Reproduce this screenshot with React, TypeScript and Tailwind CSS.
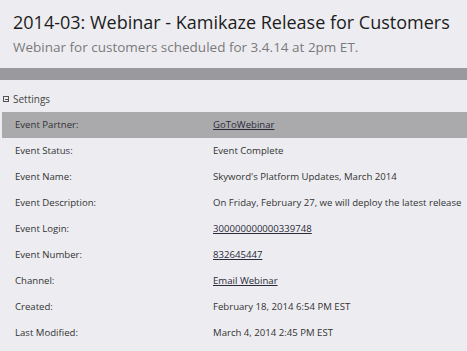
import React from 'react';

interface Field {
  label: string;
  value: string;
  link?: boolean;
}

const fields: Field[] = [
  { label: 'Event Partner:', value: 'GoToWebinar', link: true },
  { label: 'Event Status:', value: 'Event Complete' },
  { label: 'Event Name:', value: "Skyword's Platform Updates, March 2014" },
  { label: 'Event Description:', value: 'On Friday, February 27, we will deploy the latest release' },
  { label: 'Event Login:', value: '300000000000339748', link: true },
  { label: 'Event Number:', value: '832645447', link: true },
  { label: 'Channel:', value: 'Email Webinar', link: true },
  { label: 'Created:', value: 'February 18, 2014 6:54 PM EST' },
  { label: 'Last Modified:', value: 'March 4, 2014 2:45 PM EST' },
];

const App: React.FC = () => {
  return (
    <div className="w-[467px] h-[351px] overflow-hidden bg-[#ededf1] font-['Open_Sans',sans-serif]">
      <div className="pl-[13px] pt-[9px]">
        <h1 className="text-[18px] leading-[26px] text-[#1c1c1c] whitespace-nowrap">
          2014-03: Webinar - Kamikaze Release for Customers
        </h1>
        <p className="mt-[3px] text-[13.5px] leading-[18px] text-[#7a7a7c]">
          Webinar for customers scheduled for 3.4.14 at 2pm ET.
        </p>
      </div>
      <div className="mt-[12px] h-[12px] bg-[#9a9a9e]" />
      <div className="flex items-center h-[32px] pt-[6px] pl-[3px] text-[10px] text-[#444]">
        <span className="mr-[4px] inline-flex h-[6px] w-[6px] items-center justify-center border border-[#555]">
          <span className="h-px w-[3px] bg-[#555]" />
        </span>
        Settings
      </div>
      <div className="flex flex-col">
        {fields.map((f, i) => (
          <div
            key={f.label}
            className={`flex items-center h-[26px] text-[9.6px] text-[#333] whitespace-nowrap ${
              i === 0 ? 'ml-[2px] bg-[#aaaaad]' : ''
            }`}
          >
            <div className={`shrink-0 ${i === 0 ? 'w-[211px] pl-[13px]' : 'w-[213px] pl-[15px]'}`}>{f.label}</div>
            <div className={f.link ? 'underline text-[#2a2a3a]' : ''}>{f.value}</div>
          </div>
        ))}
      </div>
    </div>
  );
};

export default App;
